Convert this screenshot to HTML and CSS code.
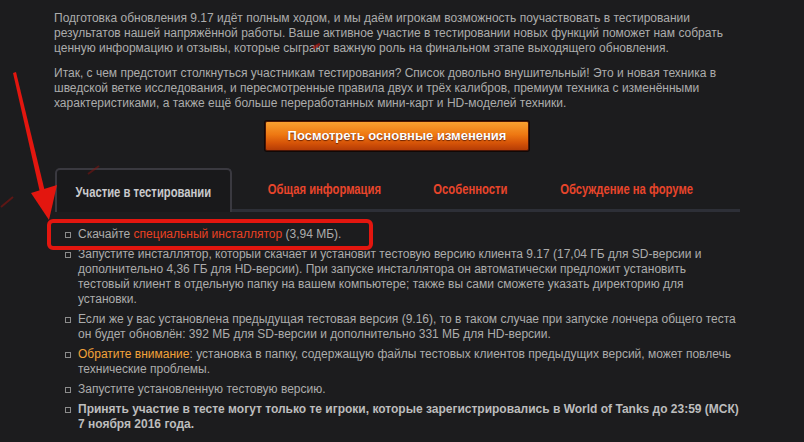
FILE: index.html
```html
<!DOCTYPE html>
<html lang="ru">
    <head>
        <meta charset="UTF-8" />
        <title>Общий тест 9.17</title>
        <link rel="stylesheet" href="styles.css">
    </head>
    <body>
        <main class="content">
            <p>Подготовка обновления 9.17 идёт полным ходом, и мы даём игрокам возможность поучаствовать в тестировании результатов нашей напряжённой работы. Ваше активное участие в тестировании новых функций поможет нам собрать ценную информацию и отзывы, которые сыграют важную роль на финальном этапе выходящего обновления.</p>
            <p>Итак, с чем предстоит столкнуться участникам тестирования? Список довольно внушительный! Это и новая техника в шведской ветке исследования, и пересмотренные правила двух и трёх калибров, премиум техника с изменёнными характеристиками, а также ещё больше переработанных мини-карт и HD-моделей техники.</p>

            <div class="actions">
                <a class="big-button" href="#">Посмотреть основные изменения</a>
            </div>

            <nav class="tabs">
                <a class="tab active" href="#"><span>Участие в тестировании</span></a>
                <div class="tab-rest">
                    <a class="tab tab-info" href="#"><span>Общая информация</span></a>
                    <a class="tab tab-features" href="#"><span>Особенности</span></a>
                    <a class="tab tab-forum" href="#"><span>Обсуждение на форуме</span></a>
                </div>
            </nav>

            <ul class="steps">
                <li>Скачайте <a class="link" href="#">специальный инсталлятор</a> (3,94 МБ).</li>
                <li>Запустите инсталлятор, который скачает и установит тестовую версию клиента 9.17 (17,04 ГБ для SD-версии и дополнительно 4,36 ГБ для HD-версии). При запуске инсталлятора он автоматически предложит установить тестовый клиент в отдельную папку на вашем компьютере; также вы сами сможете указать директорию для установки.</li>
                <li>Если же у вас установлена предыдущая тестовая версия (9.16), то в таком случае при запуске лончера общего теста он будет обновлён: 392 МБ для SD-версии и дополнительно 331 МБ для HD-версии.</li>
                <li><span class="note">Обратите внимание</span>: установка в папку, содержащую файлы тестовых клиентов предыдущих версий, может повлечь технические проблемы.</li>
                <li>Запустите установленную тестовую версию.</li>
                <li class="strong">Принять участие в тесте могут только те игроки, которые зарегистрировались в World of Tanks до 23:59 (МСК) 7 ноября 2016 года.</li>
            </ul>
        </main>

        <!-- annotation drawn over the screenshot -->
        <div class="mark-box"></div>
        <svg class="mark-arrow" width="804" height="442" viewBox="0 0 804 442">
            <polygon points="13,73 16,72 46,196 41,197" fill="#e3160f" />
            <polygon points="49,220 31,193 57,185" fill="#e3160f" />
            <line x1="1" y1="207" x2="13" y2="197" stroke="#8a1410" stroke-width="2" opacity="0.6" />
            <line x1="88" y1="174" x2="99" y2="166" stroke="#8a1410" stroke-width="2" opacity="0.5" />
            <line x1="313" y1="48" x2="320" y2="44" stroke="#a5130f" stroke-width="3" opacity="0.7" />
        </svg>
    </body>
</html>
```

FILE: styles.css
```css
body {
    margin: 0;
    padding: 0;
    background-color: #1c1c1e;
    color: #acacac;
    font-family: "Liberation Sans", Arial, sans-serif;
    font-size: 12px;
    line-height: 15px;
}

.content {
    width: 686px;
    padding: 11px 0 0 54px;
}

p {
    margin: 0 0 10px 0;
}

.actions {
    display: flex;
    justify-content: center;
    margin-bottom: 17px;
}

.big-button {
    display: block;
    height: 28px;
    line-height: 28px;
    padding: 0 22px;
    border: 1px solid #4a1606;
    border-radius: 2px;
    box-shadow: 0 0 0 1px #120806;
    background: linear-gradient(#f8a030 0%, #ee7812 45%, #d65408 75%, #b53c06 100%);
    color: #fff;
    font-weight: bold;
    font-size: 13px;
    text-decoration: none;
    text-shadow: 0 1px 1px #6a2000;
}

.tabs {
    display: flex;
    margin: 0 0 15px 1px;
}

.tab {
    display: flex;
    justify-content: center;
    align-items: center;
    font-weight: bold;
    font-size: 15px;
    color: #e8452b;
    text-decoration: none;
    white-space: nowrap;
}

/* the site font is a narrow one, squeeze Arial to its width */
.tab span {
    display: inline-block;
    transform: scaleX(0.75);
}

.tab.active {
    width: 173px;
    height: 42px;
    color: #c9c9cc;
    border: 2px solid #3a3940;
    border-bottom: none;
    border-radius: 5px 5px 0 0;
    background-color: #19191b;
}

.tab-rest {
    flex: 1;
    display: flex;
    border-bottom: 3px solid #2d2f37;
}

.tab-rest .tab {
    height: 41px;
}

.tab-info {
    width: 184px;
}

.tab-features {
    width: 108px;
}

.tab-forum {
    width: 206px;
}

.steps {
    list-style: none;
    margin: 0;
    padding: 0 0 0 24px;
}

.steps li {
    position: relative;
    margin-bottom: 5px;
}

.steps li::before {
    content: "";
    position: absolute;
    left: -13px;
    top: 5px;
    width: 4px;
    height: 4px;
    border: 1px solid #8c8c8c;
}

.steps .strong {
    font-weight: bold;
    color: #bdbdbd;
}

.link {
    color: #ea4122;
    text-decoration: none;
}

.note {
    color: #f2a23a;
}

.mark-box {
    position: absolute;
    left: 47px;
    top: 219px;
    width: 318px;
    height: 23px;
    border: 4px solid #e3160f;
    border-radius: 6px;
}

.mark-arrow {
    position: absolute;
    left: 0;
    top: 0;
    pointer-events: none;
}
```
